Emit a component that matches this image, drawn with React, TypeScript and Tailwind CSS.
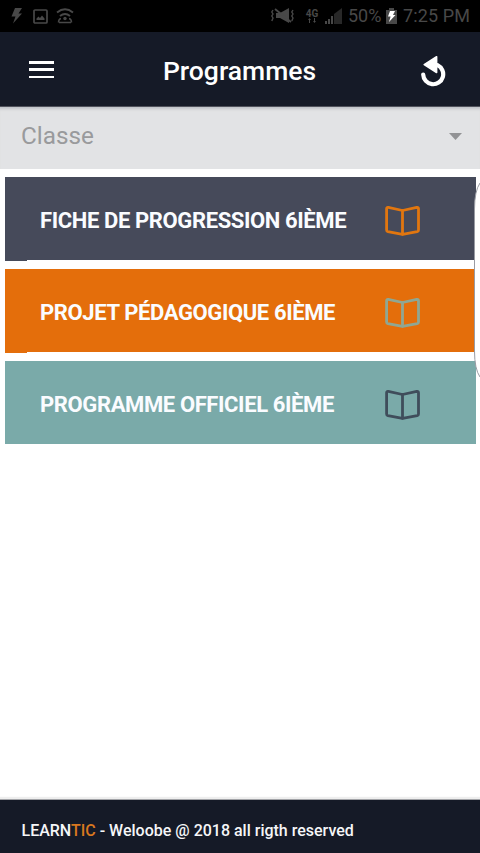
import { clsx } from "clsx";

interface Programme {
  id: number;
  title: string;
  card: string;
  icon: string;
}

const programmes: Programme[] = [
  { id: 1, title: "FICHE DE PROGRESSION 6IÈME", card: "bg-[#464a5a]", icon: "text-[#e1760f]" },
  { id: 2, title: "PROJET PÉDAGOGIQUE 6IÈME", card: "bg-[#e46e0b]", icon: "text-[#8fa793]" },
  { id: 3, title: "PROGRAMME OFFICIEL 6IÈME", card: "bg-[#7aaaa9]", icon: "text-[#3f4d5b]" },
];

function BookIcon({ className }: { className?: string }) {
  return (
    <svg viewBox="0 0 36 32" className={clsx("h-8 w-9", className)} fill="none" stroke="currentColor"
      strokeWidth="2.8" strokeLinejoin="round" strokeLinecap="round">
      <path d="M17.5 5.5 3.3 2.4Q1.6 2 1.6 3.7V25Q1.6 26.3 2.9 26.6L17.5 29.3 32.2 26.6Q33.5 26.3 33.5 25V3.7Q33.5 2 31.8 2.4Z" />
      <path d="M17.5 5.5V29.3" />
    </svg>
  );
}

function StatusBar() {
  return (
    <div className="flex h-8 shrink-0 items-center justify-between bg-black pl-[10px] pr-[9px] text-[#484848]">
      <div className="flex items-center gap-[10px]">
        <svg viewBox="0 0 13 16" className="h-4 w-[13px]" fill="currentColor">
          <path d="M5 0H12L8.5 5.5H12L3 15.5 5.5 8.5H1.5Z" />
        </svg>
        <svg viewBox="0 0 15 15" className="h-[15px] w-[15px]" fill="none" stroke="currentColor" strokeWidth="1.7">
          <rect x="1" y="1" width="13" height="13" rx="1" />
          <path d="M3.5 11V9.5L5.5 7.5 7 9 9 6.5 11.5 9.5V11Z" fill="currentColor" stroke="none" />
        </svg>
        <svg viewBox="0 0 18 16" className="-ml-0.5 h-4 w-[18px]" fill="none" stroke="currentColor" strokeWidth="1.9">
          <path d="M1 4.5Q9-1.8 17 4.5M4 8Q9 3.8 14 8" />
          <path d="M2.5 14.5Q2.5 11 5 10.5M15.5 14.5Q15.5 11 13 10.5M3 14.6H15" strokeWidth="1.5" />
          <circle cx="9" cy="10.5" r="1.7" fill="currentColor" stroke="none" />
        </svg>
      </div>
      <div className="flex items-center">
        <svg viewBox="0 0 24 16" className="h-4 w-6" fill="currentColor">
          <path d="M5 5H9L18 0V15L9 10H5Z" />
          <path d="M4 1 20 14" stroke="currentColor" strokeWidth="1.8" />
          <path d="M2 2 .8 4 2 6 .8 8 2 10 .8 13M22 2 20.8 4 22 6 20.8 8 22 10 20.8 13" fill="none" stroke="currentColor" strokeWidth="1.4" />
        </svg>
        <div className="ml-[10px] flex w-[14px] flex-col items-center font-bold leading-none">
          <span className="text-[10px] leading-[9px]">4G</span>
          <svg viewBox="0 0 8 5" className="h-[5px] w-2" fill="currentColor">
            <path d="M0 2 1.5 0 3 2H2V5H1V2ZM5 3 6.5 5 8 3H7V0H6V3Z" />
          </svg>
        </div>
        <svg viewBox="0 0 17 16" className="ml-[6px] h-4 w-[17px]" fill="currentColor">
          <path d="M0 13H2V16H0ZM3 11H5V16H3ZM6 8H8V16H6Z" />
          <path d="M9 6 17 0V16H9Z" opacity=".55" />
        </svg>
        <span className="ml-[6px] w-[35px] whitespace-nowrap text-[18px] leading-8">50%</span>
        <svg viewBox="0 0 11 16" className="ml-[3px] h-4 w-[11px]">
          <path d="M3 0H8V2H11V16H0V2H3Z" fill="#484848" />
          <path d="M4 3H9L7 7H9.5L3 14 4.6 8.5H2Z" fill="#fff" />
        </svg>
        <span className="ml-[6px] w-[68px] whitespace-nowrap text-[18px] leading-8 tracking-[0.1px]">7:25 PM</span>
      </div>
    </div>
  );
}

export default function App() {
  return (
    <div className="relative flex h-[853px] w-[480px] flex-col overflow-hidden bg-white font-[Roboto,sans-serif]">
      <StatusBar />

      <header className="flex h-[75px] shrink-0 items-center justify-between border-b border-[#50525c] bg-[#151a27] pl-[29px] pr-[34px] pt-1 text-white">
        <div className="mb-[3px] flex h-[17px] w-[25px] flex-col justify-between">
          <span className="h-[2.5px] bg-white" />
          <span className="h-[2.5px] bg-white" />
          <span className="h-[2.5px] bg-white" />
        </div>
        <h1 className="ml-[5px] text-[26.5px] font-medium leading-8">Programmes</h1>
        <svg viewBox="0 0 26 32" className="h-8 w-[26px]" fill="none">
          <path d="M3.2 19.5A10 10 0 1 0 17.5 10.2" stroke="#fff" strokeWidth="4.2" strokeLinecap="round" />
          <path d="M16.6 1.8V17.5L4.2 9.6Z" fill="#fff" stroke="#fff" strokeWidth="1.6" strokeLinejoin="round" />
        </svg>
      </header>

      <div className="flex h-[62px] shrink-0 items-center justify-between bg-[#e2e3e5] pb-1 pl-[21px] pr-[18px] shadow-[inset_0_4px_3px_-2px_#bfc2c7]">
        <span className="text-[24.3px] text-[#999a9c]">Classe</span>
        <svg viewBox="0 0 13 7" className="h-[7px] w-[13px]" fill="#929395">
          <path d="M0 0H13L6.5 7Z" />
        </svg>
      </div>

      <main className="flex flex-1 flex-col gap-[9px] pl-[5px] pr-1 pt-2">
        {programmes.map((p) => (
          <div key={p.id} className={clsx("relative flex h-[83px] items-center justify-between pl-[35px] pr-[55px] pt-1", p.card)}>
            <span className="whitespace-nowrap text-[22px] font-bold tracking-[-0.38px] text-[#fafcff]">{p.title}</span>
            <BookIcon className={p.icon} />
            {p.id < 3 && <span className={clsx("absolute left-0 top-full h-px w-[22px]", p.card)} />}
          </div>
        ))}
      </main>

      <footer className="flex h-[54px] shrink-0 items-center border-t border-[#a2a3a7] bg-[#151a27] pl-[21.5px] pt-2 text-[16px] font-medium text-[#f5f6f8] shadow-[0_-2px_1px_#eeeeee]">
        <p className="whitespace-nowrap">LEARN<span className="text-[#d9771f]">TIC</span> - Weloobe @ 2018 all rigth reserved</p>
      </footer>

      {/* edge panel handle */}
      <svg viewBox="0 0 7 194" className="absolute right-0 top-[183px] h-[194px] w-[7px]">
        <path d="M7 0Q1.5 8 1.5 26V168Q1.5 186 7 194Z" fill="#fff" />
        <path d="M7 0Q1.5 8 1.5 26V168Q1.5 186 7 194" fill="none" stroke="#999ba3" />
      </svg>
    </div>
  );
}
